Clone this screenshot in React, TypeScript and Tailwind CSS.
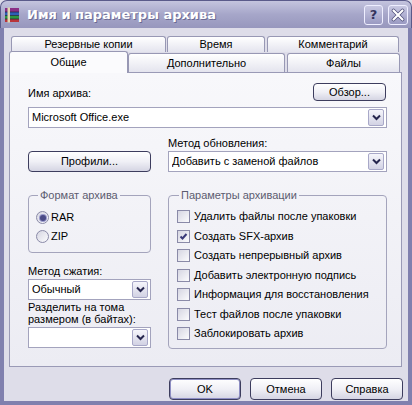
import React from "react";

const font = "font-['Liberation_Sans',Arial,sans-serif]";

const Chevron = () => (
  <svg width="9" height="7" viewBox="0 0 9 7">
    <path d="M1 1.5 L4.5 5 L8 1.5" stroke="#26264e" strokeWidth="2" fill="none" />
  </svg>
);

const Combo = ({ value, className = "" }: { value: string; className?: string }) => (
  <div className={`flex h-[21px] items-center border border-[#a3a3bd] bg-white pl-[3px] pr-[2px] ${className}`}>
    <span className="flex-1 truncate">{value}</span>
    <span className="flex h-[17px] w-[16px] items-center justify-center rounded-[2px] border border-[#a8a8c8] bg-gradient-to-b from-[#f6f6fb] to-[#d2d2e4]">
      <Chevron />
    </span>
  </div>
);

const Btn = ({ children, className = "", def = false }: { children: React.ReactNode; className?: string; def?: boolean }) => (
  <div
    className={`flex items-center justify-center rounded-[4px] border border-[#3d3d5e] bg-gradient-to-b from-white via-[#f0f0f6] to-[#d5d5e3] ${
      def ? "shadow-[inset_0_0_0_1px_#8e8ec4]" : ""
    } ${className}`}
  >
    {children}
  </div>
);

const Check = ({ checked = false }: { checked?: boolean }) => (
  <span className="flex h-[13px] w-[13px] shrink-0 items-center justify-center border border-[#8a8aa8] bg-gradient-to-br from-[#d6d6e2] to-[#fbfbfd]">
    {checked && (
      <svg width="9" height="9" viewBox="0 0 9 9">
        <path d="M1.5 4.5 L3.5 6.5 L7.5 2" stroke="#3a3a78" strokeWidth="2" fill="none" />
      </svg>
    )}
  </span>
);

const Radio = ({ on = false }: { on?: boolean }) => (
  <span className="flex h-[13px] w-[13px] shrink-0 items-center justify-center rounded-full border border-[#8a8aa8] bg-gradient-to-br from-[#d6d6e2] to-[#fbfbfd]">
    {on && <span className="h-[6px] w-[6px] rounded-full bg-[#4a4a86] shadow-[0_0_0_1px_#9a9acc]" />}
  </span>
);

const Tab = ({ label, className = "" }: { label: string; className?: string }) => (
  <div
    className={`flex items-center justify-center rounded-t-[3px] border border-b-0 border-[#9898b4] bg-gradient-to-b from-white to-[#e4e4ee] ${className}`}
  >
    {label}
  </div>
);

const options = [
  { label: "Удалить файлы после упаковки" },
  { label: "Создать SFX-архив", checked: true },
  { label: "Создать непрерывный архив" },
  { label: "Добавить электронную подпись" },
  { label: "Информация для восстановления" },
  { label: "Тест файлов после упаковки" },
  { label: "Заблокировать архив" },
];

export default function App() {
  return (
    <div className={`flex h-[405px] w-[412px] flex-col overflow-hidden bg-[#dedde9] text-[11px] leading-[13px] text-black ${font}`}>
      {/* title bar */}
      <div className="flex h-[28px] shrink-0 items-center rounded-t-[7px] border-x border-t border-[#5a5a8a] bg-gradient-to-b from-[#c4c4de] via-[#a6a6c9] to-[#9797bd] pl-[3px] pr-[3px]">
        <svg width="16" height="16" viewBox="0 0 16 16">
          <rect x="1" y="1" width="14" height="4" fill="#8a2f86" />
          <rect x="1" y="5" width="14" height="3.5" fill="#2f5fb6" />
          <rect x="1" y="8.5" width="14" height="3.5" fill="#2f9640" />
          <rect x="1" y="12" width="14" height="3" fill="#b8343a" />
          <path d="M1 5H15M1 8.5H15M1 12H15" stroke="#20203a" strokeWidth="0.7" />
          <rect x="3.5" y="0.5" width="2.5" height="15" fill="#e2d6b0" />
        </svg>
        <span className="ml-[7px] flex-1 font-['DejaVu_Sans',sans-serif] text-[13px] font-bold text-white [text-shadow:1px_1px_0_#6a6a94]">
          Имя и параметры архива
        </span>
        <div className="flex h-[20px] w-[19px] items-center justify-center rounded-[3px] border border-[#eef] bg-gradient-to-b from-[#c8c8e2] to-[#9a9ac2] font-['DejaVu_Sans',sans-serif] text-[13px] font-bold text-[#34345e]">
          ?
        </div>
        <div className="ml-[5px] flex h-[20px] w-[20px] items-center justify-center rounded-[3px] border border-[#eef] bg-gradient-to-b from-[#c8c8e2] to-[#9a9ac2]">
          <svg width="14" height="14" viewBox="0 0 14 14">
            <path d="M2.5 2.5 L11.5 11.5 M11.5 2.5 L2.5 11.5" stroke="#50507a" strokeWidth="3.6" strokeLinecap="round" />
            <path d="M2.5 2.5 L11.5 11.5 M11.5 2.5 L2.5 11.5" stroke="white" strokeWidth="2.2" strokeLinecap="round" />
          </svg>
        </div>
      </div>

      {/* body */}
      <div className="flex flex-1 flex-col border-x-4 border-b-4 border-[#8080ae] px-[5px] pt-[8px]">
        <div className="ml-[2px] flex h-[16px]">
          <Tab label="Резервные копии" className="w-[155px]" />
          <Tab label="Время" className="ml-[1px] w-[98px]" />
          <Tab label="Комментарий" className="ml-[2px] w-[132px]" />
        </div>
        <div className="flex h-[20px] items-end">
          <div className="relative z-10 -mb-[1px] flex h-[22px] w-[119px] items-center justify-center rounded-t-[3px] border border-b-0 border-[#9898b4] bg-[#fbfbfd]">
            Общие
          </div>
          <Tab label="Дополнительно" className="h-[19px] w-[157px]" />
          <Tab label="Файлы" className="ml-[2px] h-[19px] w-[113px]" />
        </div>

        {/* panel */}
        <div className="mr-[1px] flex h-[295px] flex-col border border-[#9a9ab6] bg-gradient-to-b from-[#f8f8fb] to-[#ececf3] pl-[18px] pr-[14px] pt-[10px]">
          <div className="flex h-[18px] items-end justify-between">
            <span className="pb-[1px]">Имя архива:</span>
            <Btn className="mr-[1px] h-[18px] w-[73px]">Обзор...</Btn>
          </div>
          <Combo value="Microsoft Office.exe" className="mt-[6px]" />

          <div className="flex gap-[17px]">
            {/* left column */}
            <div className="flex w-[123px] flex-col">
              <Btn className="mt-[23px] h-[21px]">Профили...</Btn>
              <fieldset className="mt-[17px] h-[64px] rounded-[4px] border border-[#a4a4bc] pl-[7px] pt-[6px]">
                <legend className="ml-[2px] px-[2px] text-[#5c5c70]">Формат архива</legend>
                <div className="flex h-[19px] items-center gap-[2px]">
                  <Radio on />
                  <span>RAR</span>
                </div>
                <div className="flex h-[19px] items-center gap-[2px]">
                  <Radio />
                  <span>ZIP</span>
                </div>
              </fieldset>
              <span className="mt-[12px]">Метод сжатия:</span>
              <Combo value="Обычный" className="mt-[1px]" />
              <span className="mt-[1px] leading-[12px]">
                Разделить на тома
                <br />
                размером (в байтах):
              </span>
              <Combo value="" className="mt-[2px]" />
            </div>

            {/* right column */}
            <div className="flex flex-1 flex-col">
              <span className="mt-[9px]">Метод обновления:</span>
              <Combo value="Добавить с заменой файлов" className="mt-[1px]" />
              <fieldset className="mt-[17px] h-[160px] rounded-[4px] border border-[#a4a4bc] pl-[8px] pt-[5px]">
                <legend className="ml-[2px] px-[2px] text-[#5c5c70]">Параметры архивации</legend>
                {options.map((o) => (
                  <div key={o.label} className="flex h-[19.5px] items-center gap-[4px]">
                    <Check checked={o.checked} />
                    <span>{o.label}</span>
                  </div>
                ))}
              </fieldset>
            </div>
          </div>
        </div>

        {/* buttons */}
        <div className="mt-[11px] flex justify-end gap-[9px]">
          <Btn def className="h-[22px] w-[72px]">OK</Btn>
          <Btn className="h-[22px] w-[72px]">Отмена</Btn>
          <Btn className="h-[22px] w-[72px]">Справка</Btn>
        </div>
      </div>
    </div>
  );
}
